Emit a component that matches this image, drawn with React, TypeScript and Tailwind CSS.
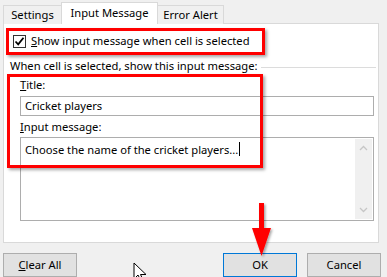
import React from "react";

function Tab({ label, active }: { label: string; active?: boolean }) {
  if (active) {
    return (
      <div className="relative z-10 -mx-px flex h-[22px] w-[97px] items-center justify-center border border-b-0 border-[#d9d9d9] bg-white pb-[1px] text-[11.2px] text-black">
        {label}
      </div>
    );
  }
  return (
    <div className="flex h-[19px] items-center justify-center border border-b-0 border-[#d9d9d9] bg-[#f0f0f0] text-[11.2px] text-black">
      {label}
    </div>
  );
}

function Btn({ children, primary, className }: { children: React.ReactNode; primary?: boolean; className?: string }) {
  return (
    <div
      className={
        "flex h-[24px] w-[74px] items-center justify-center border bg-[#e1e1e1] text-[11.2px] text-black " +
        (primary ? "border-[#0078d7] " : "border-[#adadad] ") +
        (className ?? "")
      }
    >
      {children}
    </div>
  );
}

export default function App() {
  return (
    <div
      className="relative h-[277px] w-[387px] overflow-hidden bg-[#f0f0f0] text-black"
      style={{ fontFamily: '"Noto Sans", "Open Sans", sans-serif' }}
    >
      {/* tabs */}
      <div className="flex items-end pl-[3px] pt-[2px]">
        <div className="w-[59px]">
          <Tab label="Settings" />
        </div>
        <Tab label="Input Message" active />
        <div className="w-[67px]">
          <Tab label="Error Alert" />
        </div>
      </div>

      {/* panel */}
      <div className="ml-[3px] h-[220px] w-[376px] border border-[#d9d9d9] bg-white -mt-px">
        <div className="flex items-center pl-[9px] pt-[9px]">
          <div className="flex h-[13px] w-[13px] items-center justify-center border border-[#333] bg-white">
            <svg width="11" height="11" viewBox="0 0 11 11">
              <path d="M1.5 5.5 L4.2 8.3 L9.5 1.8" fill="none" stroke="#000" strokeWidth="1.8" />
            </svg>
          </div>
          <span className="ml-[5px] text-[11.2px] leading-[16px]">
            <span className="underline">S</span>how input message when cell is selected
          </span>
        </div>

        <div className="mt-[9px] flex items-center pl-[6px] pr-[2px]">
          <span className="text-[11.2px] leading-[16px]">When cell is selected, show this input message:</span>
          <div className="ml-[4px] mt-[2px] h-px flex-1 bg-[#dcdcdc]" />
        </div>

        <div className="pl-[16px] pr-[4px]">
          <div className="mt-[3px] text-[11.2px] leading-[16px]">
            <span className="underline">T</span>itle:
          </div>
          <div className="mt-[3px] flex h-[20px] items-center border border-[#adadad] bg-white pl-[4px] text-[11.2px]">
            Cricket players
          </div>
          <div className="mt-[3px] text-[11.2px] leading-[16px]">
            <span className="underline">I</span>nput message:
          </div>
          <div className="mt-[2px] flex h-[84px] border border-[#adadad] bg-white">
            <div className="flex-1 pl-[4px] pt-[2px] text-[11.2px] leading-[16px]">
              Choose the name of the cricket players...
              <span className="ml-px inline-block h-[14px] w-px translate-y-[2px] bg-black" />
            </div>
            <div className="my-px mr-px flex w-[17px] flex-col items-center justify-between bg-[#f0f0f0] py-[6px]">
              <svg width="9" height="6" viewBox="0 0 9 6">
                <path d="M1 5 L4.5 1.5 L8 5" fill="none" stroke="#c6c6c6" strokeWidth="1.3" />
              </svg>
              <svg width="9" height="6" viewBox="0 0 9 6">
                <path d="M1 1 L4.5 4.5 L8 1" fill="none" stroke="#c6c6c6" strokeWidth="1.3" />
              </svg>
            </div>
          </div>
        </div>
      </div>

      {/* buttons */}
      <div className="mt-[10px] flex pl-[3px]">
        <Btn>
          <span className="underline">C</span>lear All
        </Btn>
        <Btn primary className="ml-[146px]">
          OK
        </Btn>
        <Btn className="ml-[10px]">Cancel</Btn>
      </div>

      {/* annotations */}
      <div className="absolute left-[6px] top-[28px] h-[27px] w-[259px] border-[3px] border-[#ff0000] shadow-[2px_2px_3px_rgba(0,0,0,0.35)]" />
      <div className="absolute left-[7px] top-[74px] h-[94px] w-[256px] border-[3px] border-[#ff0000] shadow-[2px_2px_3px_rgba(0,0,0,0.35)]" />

      <svg className="absolute left-[248px] top-[200px]" width="28" height="60" viewBox="0 0 28 60">
        <defs>
          <filter id="sh" x="-50%" y="-50%" width="200%" height="200%">
            <feDropShadow dx="1.5" dy="1.5" stdDeviation="1.2" floodColor="#000" floodOpacity="0.35" />
          </filter>
        </defs>
        <path d="M11 3 H16 V28 H23 L13.5 56 L4 28 H11 Z" fill="#ff0000" filter="url(#sh)" />
      </svg>

      <svg className="absolute left-[133px] top-[262px]" width="14" height="20" viewBox="0 0 14 20">
        <path d="M1 1 V17 L5 13 L8 19 L10 18 L7.5 12.5 H13 Z" fill="#fff" stroke="#000" strokeWidth="1" />
      </svg>
    </div>
  );
}
